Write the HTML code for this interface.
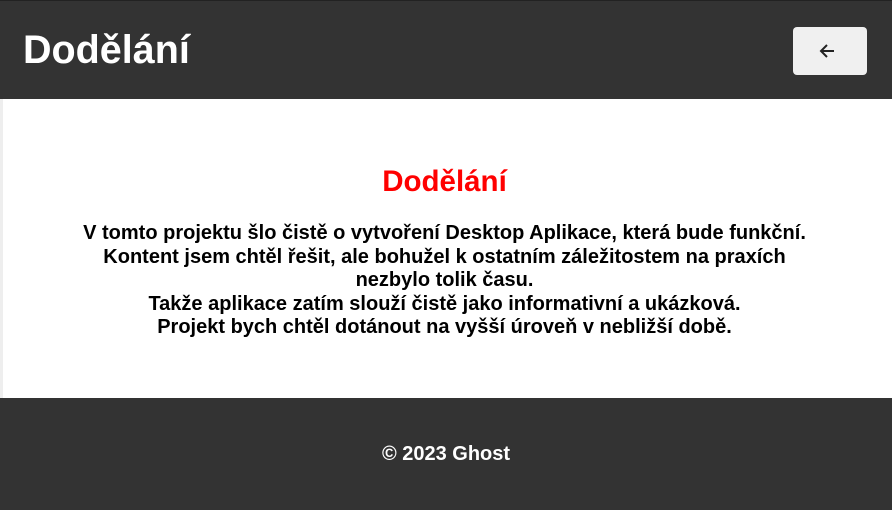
<!DOCTYPE html>
<html><head><meta charset="utf-8"><style>
*{margin:0;padding:0;box-sizing:border-box}
body{width:892px;height:510px;overflow:hidden;font-family:"Liberation Sans",Arial,sans-serif;background:#fff}
header{height:99px;background:#333;border-top:1px solid #222;position:relative}
header h1{position:absolute;left:23px;top:26px;color:#fff;font-size:39.5px;font-weight:bold;line-height:46px}
.btn{position:absolute;left:793px;top:26px;width:74px;height:48px;background:#f0f0f0;border-radius:4px}
main{height:299px;text-align:center;border-left:3px solid #eee;padding-right:6px}
main h2{color:#f00;font-size:29.5px;padding-top:66px;line-height:34px}
main p{font-size:20px;font-weight:bold;line-height:23.5px;margin-top:23px;color:#000}
footer{height:112px;background:#333;color:#fff;text-align:center;font-weight:bold;font-size:20px;padding-top:45px}
</style></head><body>
<header><h1>Dodělání</h1><div class="btn"><svg width="74" height="48" viewBox="0 0 74 48"><path d="M41 24H28M34 18l-6 6 6 6" stroke="#222" stroke-width="2" fill="none"/></svg></div></header>
<main><h2>Dodělání</h2><p>V tomto projektu šlo čistě o vytvoření Desktop Aplikace, která bude funkční.<br>Kontent jsem chtěl řešit, ale bohužel k ostatním záležitostem na praxích<br>nezbylo tolik času.<br>Takže aplikace zatím slouží čistě jako informativní a ukázková.<br>Projekt bych chtěl dotánout na vyšší úroveň v nebližší době.</p></main>
<footer>© 2023 Ghost</footer>
</body></html>
